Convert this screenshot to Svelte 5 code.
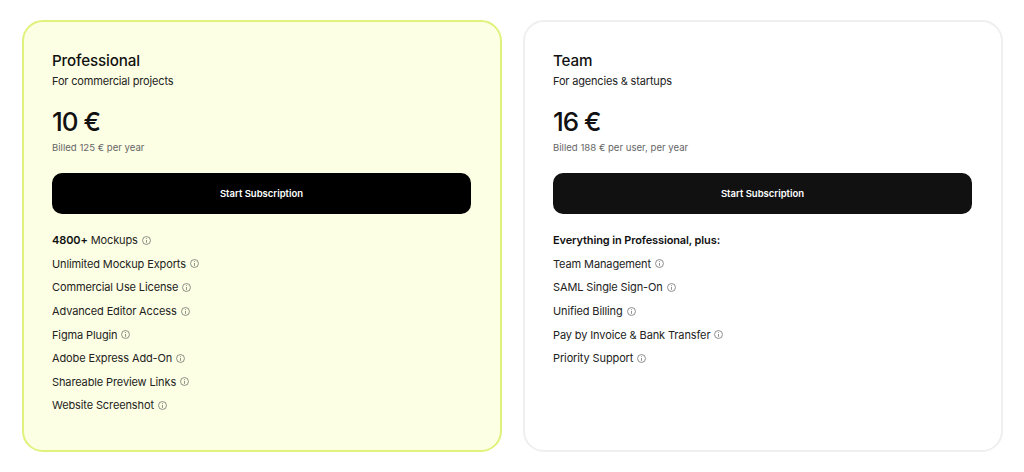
<script>
	const plans = [
		{
			name: 'Professional',
			tagline: 'For commercial projects',
			price: '10 €',
			billed: 'Billed 125 € per year',
			highlight: true,
			features: [
				{ strong: '4800+', text: 'Mockups' },
				{ text: 'Unlimited Mockup Exports' },
				{ text: 'Commercial Use License' },
				{ text: 'Advanced Editor Access' },
				{ text: 'Figma Plugin' },
				{ text: 'Adobe Express Add-On' },
				{ text: 'Shareable Preview Links' },
				{ text: 'Website Screenshot' }
			]
		},
		{
			name: 'Team',
			tagline: 'For agencies & startups',
			price: '16 €',
			billed: 'Billed 188 € per user, per year',
			highlight: false,
			features: [
				{ strong: 'Everything in Professional, plus:', plain: true },
				{ text: 'Team Management' },
				{ text: 'SAML Single Sign-On' },
				{ text: 'Unified Billing' },
				{ text: 'Pay by Invoice & Bank Transfer' },
				{ text: 'Priority Support' }
			]
		}
	]
</script>

<main>
	{#each plans as plan}
		<section class="card" class:highlight={plan.highlight}>
			<h2>{plan.name}</h2>
			<p class="tagline">{plan.tagline}</p>
			<p class="price">{plan.price}</p>
			<p class="billed">{plan.billed}</p>
			<button type="button">Start Subscription</button>
			<ul>
				{#each plan.features as f}
					<li>
						<span>
							{#if f.strong}<strong>{f.strong}</strong>{/if}
							{#if f.text}{f.text}{/if}
						</span>
						{#if !f.plain}
							<svg viewBox="0 0 10 10" width="9" height="9" aria-hidden="true">
								<circle cx="5" cy="5" r="4.4" />
								<path d="M5 4.4V7.6M5 2.4V3.4" />
							</svg>
						{/if}
					</li>
				{/each}
			</ul>
		</section>
	{/each}
</main>

<style>
	:global(body) {
		background: #fff;
		font-family: Inter, 'Liberation Sans', sans-serif;
	}
	main {
		display: grid;
		grid-template-columns: 480px 480px;
		gap: 21px;
		padding: 20px 22px 0;
	}
	.card {
		box-sizing: border-box;
		height: 432px;
		padding: 28.5px 29px 0 28px;
		border: 2px solid #efefef;
		border-radius: 21px;
		background: #fff;
		color: #111;
	}
	.card.highlight {
		background: #fdffe4;
		border-color: #e0f27c;
	}
	h2 {
		margin: 0;
		font-size: 15.2px;
		line-height: 19px;
		font-weight: 500;
		letter-spacing: -0.15px;
	}
	.tagline {
		margin: 3px 0 0;
		font-size: 11px;
		line-height: 16px;
		letter-spacing: -0.17px;
		color: #222;
	}
	.price {
		margin: 17px 0 0;
		font-size: 26px;
		line-height: 32px;
		font-weight: 500;
		letter-spacing: -1px;
	}
	.billed {
		margin: 3px 0 0;
		font-size: 9.6px;
		line-height: 13px;
		color: #666;
	}
	button {
		display: block;
		width: 100%;
		height: 41px;
		margin-top: 19px;
		border: 0;
		border-radius: 10px;
		background: #000;
		color: #fff;
		font: 600 9.5px Inter, 'Liberation Sans', sans-serif;
	}
	.card:not(.highlight) button {
		background: #111;
	}
	ul {
		list-style: none;
		margin: 15px 0 0;
		padding: 0;
	}
	li {
		display: flex;
		align-items: center;
		gap: 4px;
		height: 23.6px;
		font-size: 11px;
		letter-spacing: -0.12px;
		color: #222;
	}
	strong {
		font-weight: 600;
		color: #111;
	}
	svg {
		flex: none;
	}
	circle,
	path {
		fill: none;
		stroke: #666;
		stroke-width: 0.8;
	}
</style>
